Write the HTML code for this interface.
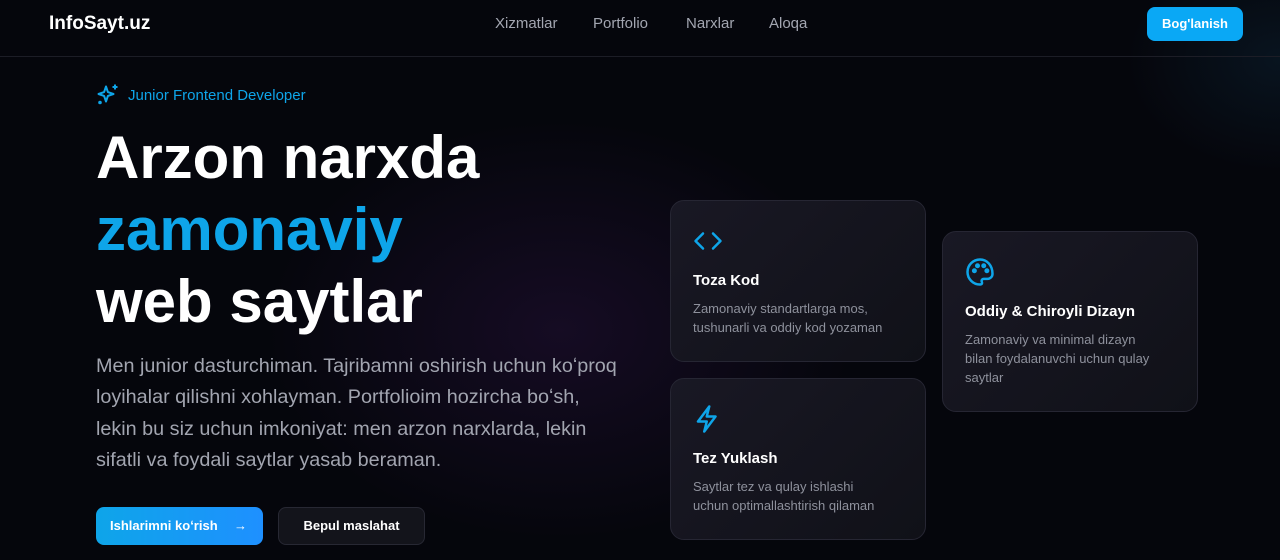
<!DOCTYPE html>
<html><head><meta charset="utf-8"><style>
*{margin:0;padding:0;box-sizing:border-box}
body{width:1280px;height:560px;overflow:hidden;background:#05060c;font-family:"Liberation Sans",sans-serif;position:relative;color:#fff}
.bg{position:absolute;inset:0;background:radial-gradient(ellipse 420px 300px at 560px 330px,rgba(60,25,90,.3),transparent 70%),radial-gradient(ellipse 220px 160px at 1280px 60px,rgba(20,70,100,.22),transparent 70%)}
nav{position:absolute;top:0;left:0;width:1280px;height:57px;border-bottom:1px solid #1c1d26}
.logo{position:absolute;left:49px;top:13px;font-weight:bold;font-size:19px;letter-spacing:0}
.links{position:absolute;top:15px;font-size:15px;color:#a3a6b1}
.links span{position:absolute;white-space:nowrap}
.nb{position:absolute;left:1147px;top:7px;width:96px;height:34px;border-radius:8px;background:#0aa8f5;font-weight:bold;font-size:13px;text-align:center;line-height:34px}
.tag{position:absolute;left:96px;top:83px;color:#0ea5e9;font-size:15px;display:flex;align-items:center;gap:8px}
h1{position:absolute;left:96px;top:122px;font-size:60px;line-height:72px;font-weight:bold;letter-spacing:0}
h1 .b{color:#0ea5e9}
p.d{position:absolute;left:96px;top:351px;width:560px;font-size:19.8px;line-height:31.3px;color:#a2a5b0;white-space:nowrap}
.b1{position:absolute;left:96px;top:507px;width:167px;height:38px;border-radius:8px;background:linear-gradient(90deg,#0ea5e9,#1e90ff);font-size:13px;font-weight:bold;line-height:38px;padding-left:14px}
.b1 i{position:absolute;right:16px;font-style:normal}
.b2{position:absolute;left:278px;top:507px;width:147px;height:38px;border-radius:8px;background:#13141b;border:1px solid #272833;font-size:13px;font-weight:bold;line-height:36px;text-align:center}
.c{position:absolute;width:256px;border-radius:14px;background:linear-gradient(135deg,#191824,#101118);border:1px solid #262633;padding:25px 22px}
.c h3{font-size:15px;margin-top:11px;margin-bottom:10px}
.c p{font-size:13px;line-height:19px;color:#8e919c;white-space:nowrap}
</style></head><body>
<div class="bg"></div>
<nav><div class="logo">InfoSayt.uz</div>
<div class="links"><span style="left:495px">Xizmatlar</span><span style="left:593px">Portfolio</span><span style="left:686px">Narxlar</span><span style="left:769px">Aloqa</span></div>
<div class="nb">Bog'lanish</div></nav>
<div class="tag"><svg width="24" height="24" viewBox="0 0 24 24" fill="none" stroke="#0ea5e9" stroke-width="2" stroke-linejoin="round"><path d="M10 3.5l1.9 5.6L17.5 11l-5.6 1.9L10 18.5l-1.9-5.6L2.5 11l5.6-1.9z"/><path d="M19 1.5v5M16.5 4h5"/><circle cx="4" cy="19.5" r=".8" fill="#0ea5e9"/></svg>Junior Frontend Developer</div>
<h1>Arzon narxda<br><span class="b">zamonaviy</span><br>web saytlar</h1>
<p class="d">Men junior dasturchiman. Tajribamni oshirish uchun koʻproq<br>loyihalar qilishni xohlayman. Portfolioim hozircha boʻsh,<br>lekin bu siz uchun imkoniyat: men arzon narxlarda, lekin<br>sifatli va foydali saytlar yasab beraman.</p>
<div class="b1">Ishlarimni koʻrish<i>→</i></div>
<div class="b2">Bepul maslahat</div>
<div class="c" style="left:670px;top:200px;height:162px"><svg width="30" height="30" viewBox="0 0 24 24" fill="none" stroke="#0ea5e9" stroke-width="2" stroke-linecap="round" stroke-linejoin="round"><path d="M8 6l-6 6 6 6M16 6l6 6-6 6"/></svg><h3>Toza Kod</h3><p>Zamonaviy standartlarga mos,<br>tushunarli va oddiy kod yozaman</p></div>
<div class="c" style="left:670px;top:378px;height:162px"><svg width="30" height="30" viewBox="0 0 24 24" fill="none" stroke="#0ea5e9" stroke-width="2" stroke-linejoin="round"><path d="M13 2L4 14h7l-2 8 9-12h-7z"/></svg><h3>Tez Yuklash</h3><p>Saytlar tez va qulay ishlashi<br>uchun optimallashtirish qilaman</p></div>
<div class="c" style="left:942px;top:231px;height:181px"><svg width="30" height="30" viewBox="0 0 24 24" fill="none" stroke="#0ea5e9" stroke-width="2"><path d="M12 2a10 10 0 0 0 0 20c1.5 0 2-1 1.5-2-.6-1.3.2-2.5 1.6-2.5H18a4 4 0 0 0 4-4C22 6.5 17.5 2 12 2z"/><circle cx="7.5" cy="11" r="1" fill="#0ea5e9"/><circle cx="10" cy="7" r="1" fill="#0ea5e9"/><circle cx="15" cy="7" r="1" fill="#0ea5e9"/><circle cx="17.5" cy="11" r="1" fill="#0ea5e9"/></svg><h3>Oddiy &amp; Chiroyli Dizayn</h3><p>Zamonaviy va minimal dizayn<br>bilan foydalanuvchi uchun qulay<br>saytlar</p></div>
</body></html>
